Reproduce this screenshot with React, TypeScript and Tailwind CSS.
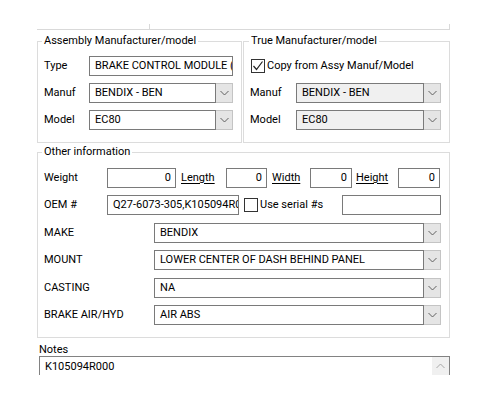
import React from "react";

function Chevron({ up = false, color = "#606060" }: { up?: boolean; color?: string }) {
  return (
    <svg width="9" height="6" viewBox="0 0 9 6" className="block">
      <path
        d={up ? "M0.5 5 L4.5 1 L8.5 5" : "M0.5 1 L4.5 5 L8.5 1"}
        fill="none"
        stroke={color}
        strokeWidth="1"
      />
    </svg>
  );
}

function Select({ value, disabled = false }: { value: string; disabled?: boolean }) {
  return (
    <div className="flex h-[20px] flex-1">
      <div
        className={
          disabled
            ? "flex-1 border border-[#7a7a7a] bg-[#f0f0f0] pl-[5px] leading-[18px] overflow-hidden whitespace-nowrap"
            : "flex-1 border border-[#7a7a7a] bg-white pl-[5px] leading-[18px] overflow-hidden whitespace-nowrap"
        }
      >
        {value}
      </div>
      <div className="w-[17px] flex items-center justify-center bg-[#e5e5e5] border border-l-0 border-[#c4c4c4]">
        <Chevron />
      </div>
    </div>
  );
}

function TextBox({ value, right = false, className = "" }: { value: string; right?: boolean; className?: string }) {
  return (
    <div
      className={
        (right
          ? "h-[20px] border border-[#7a7a7a] bg-white pr-[4px] text-right leading-[18px] overflow-hidden whitespace-nowrap "
          : "h-[20px] border border-[#7a7a7a] bg-white pl-[5px] leading-[18px] overflow-hidden whitespace-nowrap ") + className
      }
    >
      {value}
    </div>
  );
}

function CheckBox({ checked }: { checked: boolean }) {
  return (
    <div className="w-[14px] h-[14px] border border-[#333333] bg-white flex items-center justify-center shrink-0">
      {checked && (
        <svg width="12" height="12" viewBox="0 0 12 12" className="block">
          <path d="M1.5 6 L4.5 9.5 L10.5 1.5" fill="none" stroke="#222222" strokeWidth="1.2" />
        </svg>
      )}
    </div>
  );
}

export default function App() {
  return (
    <div className="w-[500px] h-[400px] bg-white overflow-hidden text-[11px] text-black font-['Roboto','Liberation_Sans',Arial,sans-serif]">
      <div className="pl-[37px] flex flex-col">
        {/* top box remnant */}
        <div className="mt-[24px] w-[413px] h-[6px] flex border-b border-r border-[#d9d9d9]">
          <div className="w-[113px] h-full border-r border-[#d9d9d9]" />
        </div>

        {/* manufacturer groups */}
        <div className="mt-[11px] flex gap-[1px]">
          <div className="relative w-[205px] h-[102px] border border-[#dcdcdc] pt-[14px] pl-[6px] pr-[8px]">
            <span className="absolute left-[4px] -top-[8px] bg-white px-[2px] leading-[14px] whitespace-nowrap">
              Assembly Manufacturer/model
            </span>
            <div className="flex flex-col gap-[7px]">
              <div className="flex items-center h-[20px]">
                <div className="w-[45px]">Type</div>
                <TextBox value="BRAKE CONTROL MODULE (ECU)" className="w-[144px] pr-[1px]" />
              </div>
              <div className="flex items-center h-[20px]">
                <div className="w-[45px]">Manuf</div>
                <div className="w-[144px] flex">
                  <Select value="BENDIX - BEN" />
                </div>
              </div>
              <div className="flex items-center h-[20px]">
                <div className="w-[45px]">Model</div>
                <div className="w-[144px] flex">
                  <Select value="EC80" />
                </div>
              </div>
            </div>
          </div>

          <div className="relative w-[207px] h-[102px] border border-[#dcdcdc] pt-[14px] pl-[6px] pr-[8px]">
            <span className="absolute left-[5px] -top-[8px] bg-white px-[2px] leading-[14px] whitespace-nowrap">
              True Manufacturer/model
            </span>
            <div className="flex flex-col gap-[7px]">
              <div className="flex items-center h-[20px] pl-[1px]">
                <CheckBox checked />
                <span className="ml-[2px] whitespace-nowrap">Copy from Assy Manuf/Model</span>
              </div>
              <div className="flex items-center h-[20px]">
                <div className="w-[46px]">Manuf</div>
                <div className="w-[145px] flex">
                  <Select value="BENDIX - BEN" disabled />
                </div>
              </div>
              <div className="flex items-center h-[20px]">
                <div className="w-[46px]">Model</div>
                <div className="w-[145px] flex">
                  <Select value="EC80" disabled />
                </div>
              </div>
            </div>
          </div>
        </div>

        {/* other information */}
        <div className="relative mt-[9px] w-[413px] h-[186px] border border-[#dcdcdc] pt-[15px] pl-[6px] pr-[8px]">
          <span className="absolute left-[4px] -top-[8px] bg-white px-[2px] leading-[14px] whitespace-nowrap">
            Other information
          </span>
          <div className="flex flex-col">
            <div className="flex items-center h-[20px]">
              <div className="w-[63px] shrink-0">Weight</div>
              <TextBox value="0" right className="w-[69px] shrink-0" />
              <span className="ml-[5px] w-[45px] shrink-0 underline underline-offset-2">Length</span>
              <TextBox value="0" right className="w-[41px] shrink-0" />
              <span className="ml-[5px] w-[38px] shrink-0 underline underline-offset-2">Width</span>
              <TextBox value="0" right className="w-[42px] shrink-0" />
              <span className="ml-[4px] w-[42px] shrink-0 underline underline-offset-2">Height</span>
              <TextBox value="0" right className="w-[42px] shrink-0" />
            </div>
            <div className="flex items-center h-[20px] mt-[7px]">
              <div className="w-[63px] shrink-0">OEM #</div>
              <TextBox value="Q27-6073-305,K105094R000" className="w-[132px] pr-[1px] shrink-0" />
              <div className="ml-[5px]">
                <CheckBox checked={false} />
              </div>
              <span className="ml-[2px] whitespace-nowrap">Use serial #s</span>
              <div className="flex-1" />
              <TextBox value="" className="w-[99px] shrink-0" />
            </div>
            <div className="flex items-center h-[20px] mt-[8px]">
              <div className="w-[110px] shrink-0">MAKE</div>
              <Select value="BENDIX" />
            </div>
            <div className="flex items-center h-[20px] mt-[7px]">
              <div className="w-[110px] shrink-0">MOUNT</div>
              <Select value="LOWER CENTER OF DASH BEHIND PANEL" />
            </div>
            <div className="flex items-center h-[20px] mt-[8px]">
              <div className="w-[110px] shrink-0">CASTING</div>
              <Select value="NA" />
            </div>
            <div className="flex items-center h-[20px] mt-[7px]">
              <div className="w-[110px] shrink-0">BRAKE AIR/HYD</div>
              <Select value="AIR ABS" />
            </div>
          </div>
        </div>

        {/* notes */}
        <div className="mt-[5px] ml-[2px] leading-[13px]">Notes</div>
        <div className="ml-[2px] w-[411px] h-[19px] flex border-t border-x border-[#828282]">
          <div className="flex-1 pl-[5px] pt-[3px] leading-[13px] whitespace-nowrap overflow-hidden">K105094R000</div>
          <div className="w-[17px] bg-[#f0f0f0] flex items-center justify-center">
            <Chevron up color="#a8a8a8" />
          </div>
        </div>
      </div>
    </div>
  );
}
